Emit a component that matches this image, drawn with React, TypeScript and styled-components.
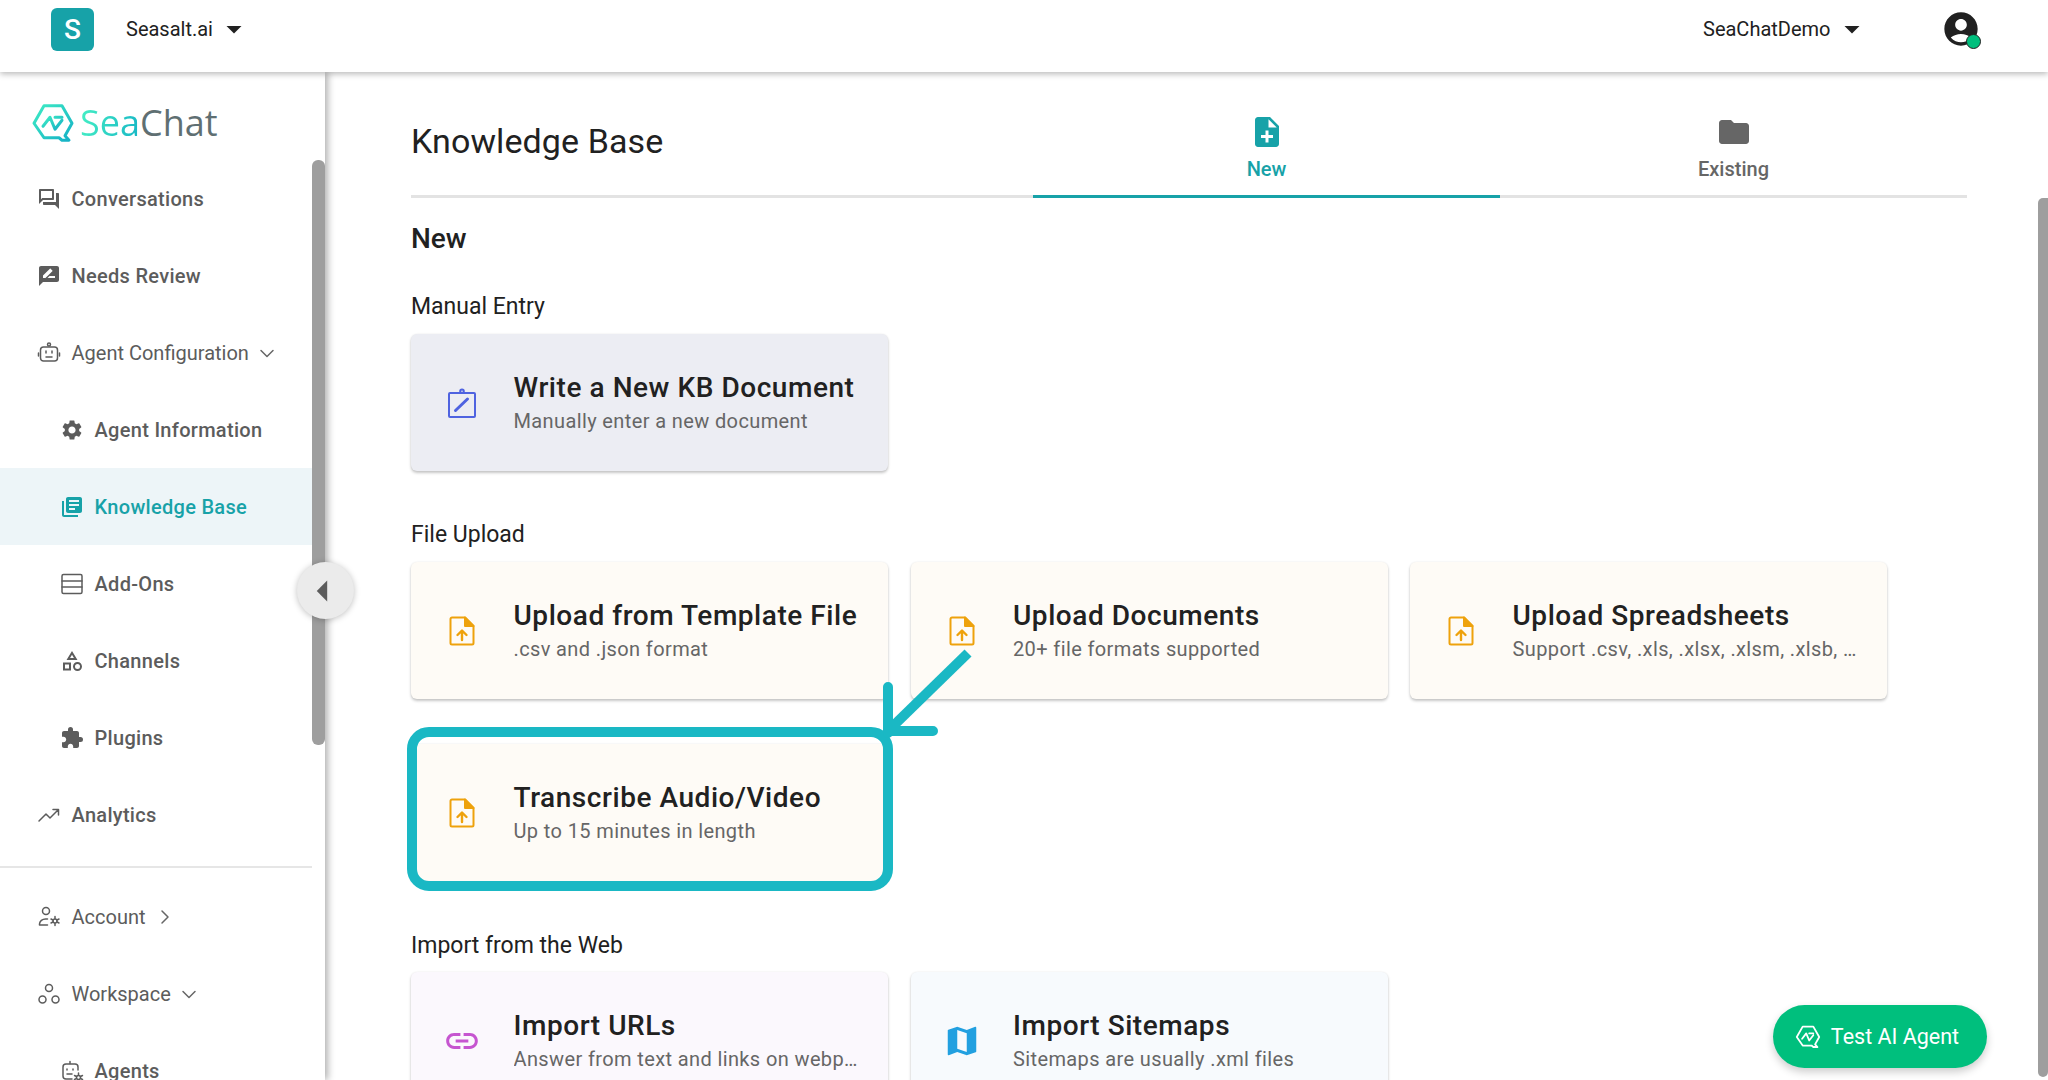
import React from "react";
import styled, { createGlobalStyle } from "styled-components";
import {
  MdArrowDropDown, MdOutlineForum, MdRateReview, MdSettings, MdLibraryBooks, MdExtension,
  MdNoteAdd, MdFolder, MdLink, MdMap,
  MdAccountCircle, MdArrowLeft, MdOutlineCategory,
} from "react-icons/md";

const Global = createGlobalStyle`
  html, body { margin: 0; padding: 0; height: 1080px; overflow: hidden; background: #fff; }
  * { box-sizing: border-box; }
  body { font-family: Roboto, "Liberation Sans", sans-serif; color: #212121; }
`;

const Page = styled.div`
  width: 2048px; height: 1080px; position: relative; overflow: hidden;
  display: flex; flex-direction: column; background: #fff;
`;
const TopBar = styled.header`
  height: 72px; flex: none; display: flex; align-items: center; padding: 0 67px 14px 51px;
  background: #fff; box-shadow: 0 2px 6px rgba(0,0,0,.28); position: relative; z-index: 3;
`;
const Badge = styled.div`
  width: 43px; height: 43px; border-radius: 6px; background: #17a2a8; color: #fff;
  display: flex; align-items: center; justify-content: center; font-size: 28px; font-weight: 500;
`;
const Switcher = styled.div<{ $gap: number }>`
  display: flex; align-items: center; margin-left: ${p => p.$gap}px; font-size: 20px; color: #212121;
  svg { margin-left: 3.5px; }
`;
const Spacer = styled.div`flex: 1;`;
const Avatar = styled.div`
  width: 40px; height: 40px; position: relative; margin-left: 71px;
  color: #212121; display: flex; align-items: center; justify-content: center;
`;
const StatusDot = styled.span`
  position: absolute; right: 0; bottom: 0; width: 15px; height: 15px; border-radius: 50%;
  background: #00bf7d; border: 1.5px solid #212121;
`;
const Body = styled.div`flex: 1; display: flex; min-height: 0; position: relative;`;
const Sidebar = styled.aside`
  width: 325px; flex: none; background: #fff; position: relative; z-index: 2;
  box-shadow: 3px 0 7px rgba(0,0,0,.3); overflow: hidden; padding-right: 13px;
`;
const LogoRow = styled.div`
  height: 88px; display: flex; align-items: center; padding: 14px 0 0 31px;
`;
const Wordmark = styled.div`
  font-family: "Open Sans", sans-serif; font-size: 36px; font-weight: 500; line-height: 1; letter-spacing: 0; margin-left: 5px;
  color: #5f6f72; display: flex;
`;
const WordSea = styled.span`
  background: linear-gradient(100deg, #45f0c4, #17b6c6);
  -webkit-background-clip: text; background-clip: text; color: transparent;
`;
const Row = styled.div<{ $active?: boolean; $indent?: boolean; $thin?: boolean }>`
  height: 77px; display: flex; align-items: center;
  padding-left: ${p => (p.$indent ? 60 : 37)}px;
  background: ${p => (p.$active ? "#edf5f8" : "transparent")};
  color: ${p => (p.$active ? "#17a2a8" : "#5c5c5c")};
  font-size: 20px; font-weight: ${p => (p.$thin ? 400 : 500)}; letter-spacing: ${p => (p.$thin ? 0 : 0.3)}px;
`;
const RowIcon = styled.span`
  width: 24px; height: 24px; margin-right: 10.500px; display: flex; align-items: center; justify-content: center; flex: none;
`;
const Chevron = styled.span<{ $gap: number }>`
  margin-left: ${p => p.$gap}px; display: flex; color: #666;
`;
const Divider = styled.div`height: 2px; background: #e6e6e6; margin: 13px 0 10px;`;
const SideThumb = styled.div`
  position: absolute; left: 312px; top: 88px; width: 13px; height: 585px; background: #9e9e9e; border-radius: 6px;
`;
const Collapse = styled.div`
  position: absolute; left: 297px; top: 490px; width: 57px; height: 57px; border-radius: 50%;
  background: #ebebeb; box-shadow: 0 1px 6px rgba(0,0,0,.25); z-index: 4; padding-right: 5px;
  display: flex; align-items: center; justify-content: center; color: #5c5c5c;
`;
const Main = styled.main`
  flex: 1; min-width: 0; padding: 0 81px 0 86px; overflow: hidden;
`;
const TitleBar = styled.div`
  height: 126px; display: flex; border-bottom: 3px solid #e3e3e3;
`;
const PageTitle = styled.h1`
  margin: 0; width: 622px; flex: none; font-size: 34px; font-weight: 400; color: #212121; padding-top: 49px; line-height: 40px; letter-spacing: .1px;
`;
const Tab = styled.div<{ $active?: boolean }>`
  flex: 1; height: 126px; display: flex; flex-direction: column; align-items: center; padding-top: 42px;
  color: ${p => (p.$active ? "#17a2a8" : "#666")};
  border-bottom: 3px solid ${p => (p.$active ? "#17a2a8" : "transparent")};
  font-size: 20px; font-weight: 500; line-height: 24px;
  svg { margin-bottom: 7px; }
`;
const SectionTitle = styled.h2`
  margin: 25px 0 0; font-size: 28px; font-weight: 500; line-height: 32px; color: #212121;
`;
const GroupLabel = styled.div<{ $top: number; $bottom?: number }>`
  margin-top: ${p => p.$top}px; font-size: 23px; line-height: 28px; color: #212121; margin-bottom: ${p => p.$bottom ?? 13}px;
`;
const CardGrid = styled.div`
  display: grid; grid-template-columns: repeat(3, 477px); gap: 45px 22.5px;
`;
const Card = styled.div<{ $bg: string }>`
  height: 137px; background: ${p => p.$bg}; border-radius: 6px; display: flex; align-items: center;
  padding-left: 32px; box-shadow: 0 2px 3px rgba(0,0,0,.22), 0 0 2px rgba(0,0,0,.08);
`;
const CardIcon = styled.div<{ $color: string }>`
  width: 38px; height: 38px; flex: none; color: ${p => p.$color}; display: flex; align-items: center; justify-content: center;
`;
const CardText = styled.div`
  margin-left: 32.500px; min-width: 0; flex: 1; padding-right: 30px; margin-top: -1px;
`;
const CardTitle = styled.div`
  font-size: 28px; font-weight: 500; line-height: 35px; color: #212121; white-space: nowrap; letter-spacing: .55px;
`;
const CardSub = styled.div`
  font-size: 20px; line-height: 28px; color: #666; white-space: nowrap; overflow: hidden; text-overflow: ellipsis; letter-spacing: .38px; margin-top: 2px;
`;
const Highlight = styled.div`
  position: absolute; left: 407px; top: 727px; width: 486px; height: 164px; border: 10px solid #1ab8c4; border-radius: 22px; z-index: 5;
`;
const ArrowMark = styled.svg`
  position: absolute; left: 870px; top: 640px; width: 110px; height: 110px; z-index: 6;
`;
const MainThumb = styled.div`
  position: absolute; right: 0; top: 126px; width: 10px; height: 879px; background: #9e9e9e; border-radius: 10px 0 10px 10px; z-index: 1;
`;
const TestButton = styled.button`
  position: absolute; left: 1773px; top: 1005px; width: 214px; height: 63px; border: 0; border-radius: 32px; padding: 0 6px 0 0;
  background: #00bf7d; color: #fff; display: flex; align-items: center; justify-content: center; gap: 10px;
  font-family: inherit; font-size: 21.500px; box-shadow: 0 4px 8px rgba(0,0,0,.2); z-index: 6;
`;

const LogoMark = ({ size = 44, stroke = "url(#lg)" }: { size?: number; stroke?: string }) => (
  <svg width={size} height={size * 0.92} viewBox="0 0 44 40" fill="none">
    <defs>
      <linearGradient id="lg" x1="0" y1="0" x2="1" y2="1">
        <stop offset="0" stopColor="#3fecc4" />
        <stop offset="1" stopColor="#14b0c6" />
      </linearGradient>
    </defs>
    <path d="M13 2.500h18L41 20l-7 12.500 4 4.500h-7l-3-2.500H13L3 20z" stroke={stroke} strokeWidth="3" strokeLinejoin="round" />
    <path d="M12 23l7-9 5 12 7-9M24 14h7" stroke={stroke} strokeWidth="3" strokeLinejoin="round" strokeLinecap="round" />
  </svg>
);
const Line = ({ d, size = 24 }: { d: React.ReactNode; size?: number }) => (
  <svg width={size} height={size} viewBox="0 0 24 24" fill="none" stroke="currentColor" strokeWidth="1.5" strokeLinecap="round" strokeLinejoin="round">{d}</svg>
);
const ChevDown = () => <Line d={<path d="M6 9.500l6 6 6-6" />} />;
const ChevRight = () => <Line d={<path d="M9 6l6 6-6 6" />} />;
const RobotIcon = () => <Line d={<>
  <rect x="3.500" y="6" width="17" height="14" rx="3" /><circle cx="12" cy="3.500" r="1.500" /><path d="M9 10v2M15 10v2M9 16h6M1.500 12v3M22.500 12v3" />
</>} />;
const AddOnsIcon = () => <Line d={<>
  <rect x="2" y="2.500" width="20" height="19" rx="1.500" /><path d="M2 9h20M2 15h20" />
</>} />;
const TrendIcon = () => <Line d={<path d="M2 18l7-7 4 4 8-8M16 6.500h5.500V12" />} />;
const AccountIcon = () => <Line d={<>
  <circle cx="9" cy="6" r="3.500" /><path d="M2.500 20h8M2.500 20v-1c0-3 3-5 6-5h2" /><circle cx="18" cy="16" r="2" /><path d="M18 11.500v2M18 18.500v2M14 14l2 1M20 17l2 1M14 18l2-1M20 15l2-1" />
</>} />;
const WorkspaceIcon = () => <Line d={<>
  <circle cx="12" cy="6" r="3.500" /><circle cx="5.500" cy="17.500" r="3.500" /><circle cx="18.500" cy="17.500" r="3.500" />
</>} />;
const AgentsIcon = () => <Line d={<>
  <path d="M12 20H6a3 3 0 0 1-3-3V8a3 3 0 0 1 3-3h9a3 3 0 0 1 3 3v3" /><path d="M7 10v1M13 10v1M7 15h5M10 2.500v2" /><circle cx="18.500" cy="18.500" r="2" /><path d="M18.500 14v2M18.500 21v2M14.500 16.500l2 1M20.500 19.500l2 1M14.500 20.500l2-1M20.500 17.500l2-1" />
</>} />;
const ClipboardIcon = () => (
  <svg width="28" height="30" viewBox="0 0 28 30" fill="none" stroke="currentColor" strokeWidth="2">
    <path d="M2 5h24a1 1 0 0 1 1 1v22a1 1 0 0 1-1 1H2a1 1 0 0 1-1-1V6a1 1 0 0 1 1-1z" />
    <circle cx="14" cy="3.200" r="1.800" />
    <path d="M7.500 22.500L19.500 11" strokeWidth="3" strokeLinecap="round" />
  </svg>
);
const Upload = () => (
  <svg width="26" height="30" viewBox="0 0 26 30" fill="none" stroke="currentColor" strokeWidth="2" strokeLinejoin="round">
    <path d="M16 1.500H3a1.500 1.500 0 0 0-1.500 1.500v24A1.500 1.500 0 0 0 3 28.500h20a1.500 1.500 0 0 0 1.500-1.500V10z" />
    <path d="M16 1.500L24.500 10H16z" fill="currentColor" />
    <path d="M13 24v-9M8.500 19l4.500-4.500 4.500 4.500" strokeWidth="2.400" strokeLinecap="round" />
  </svg>
);

type RowDef = { icon: React.ReactNode; label: string; indent?: boolean; active?: boolean; thin?: boolean; chev?: React.ReactNode; gap?: number };
const topRows: RowDef[] = [
  { icon: <MdOutlineForum size={24} />, label: "Conversations" },
  { icon: <MdRateReview size={24} />, label: "Needs Review" },
  { icon: <RobotIcon />, label: "Agent Configuration", thin: true, chev: <ChevDown />, gap: 6 },
  { icon: <MdSettings size={24} />, label: "Agent Information", indent: true },
  { icon: <MdLibraryBooks size={24} />, label: "Knowledge Base", indent: true, active: true },
  { icon: <AddOnsIcon />, label: "Add-Ons", indent: true },
  { icon: <MdOutlineCategory size={24} />, label: "Channels", indent: true },
  { icon: <MdExtension size={24} />, label: "Plugins", indent: true },
  { icon: <TrendIcon />, label: "Analytics" },
];
const bottomRows: RowDef[] = [
  { icon: <AccountIcon />, label: "Account", thin: true, chev: <ChevRight />, gap: 7 },
  { icon: <WorkspaceIcon />, label: "Workspace", thin: true, chev: <ChevDown />, gap: 6 },
  { icon: <AgentsIcon />, label: "Agents", indent: true },
];
const renderRow = (r: RowDef) => (
  <Row key={r.label} $active={r.active} $indent={r.indent} $thin={r.thin}>
    <RowIcon>{r.icon}</RowIcon>{r.label}
    {r.chev && <Chevron $gap={r.gap ?? 8}>{r.chev}</Chevron>}
  </Row>
);

const amber = "#eea20c";
const cream = "#fefbf6";

type CardDef = { title: string; sub: string; icon: React.ReactNode; color: string; bg: string };
const DocCard = ({ c }: { c: CardDef }) => (
  <Card $bg={c.bg}>
    <CardIcon $color={c.color}>{c.icon}</CardIcon>
    <CardText><CardTitle>{c.title}</CardTitle><CardSub>{c.sub}</CardSub></CardText>
  </Card>
);

const App = () => (
  <Page>
    <Global />
    <TopBar>
      <Badge>S</Badge>
      <Switcher $gap={32}>Seasalt.ai<MdArrowDropDown size={36} /></Switcher>
      <Spacer />
      <Switcher $gap={0}>SeaChatDemo<MdArrowDropDown size={36} /></Switcher>
      <Avatar><MdAccountCircle size={50} /><StatusDot /></Avatar>
    </TopBar>
    <Body>
      <Sidebar>
        <LogoRow>
          <LogoMark />
          <Wordmark><WordSea>Sea</WordSea>Chat</Wordmark>
        </LogoRow>
        {topRows.map(renderRow)}
        <Divider />
        {bottomRows.map(renderRow)}
        <SideThumb />
      </Sidebar>
      <Collapse><MdArrowLeft size={50} /></Collapse>
      <Main>
        <TitleBar>
          <PageTitle>Knowledge Base</PageTitle>
          <Tab $active><MdNoteAdd size={36} />New</Tab>
          <Tab><MdFolder size={36} />Existing</Tab>
        </TitleBar>
        <SectionTitle>New</SectionTitle>
        <GroupLabel $top={38}>Manual Entry</GroupLabel>
        <CardGrid>
          <DocCard c={{ title: "Write a New KB Document", sub: "Manually enter a new document", icon: <ClipboardIcon />, color: "#4f63e0", bg: "#ecedf3" }} />
        </CardGrid>
        <GroupLabel $top={50}>File Upload</GroupLabel>
        <CardGrid>
          <DocCard c={{ title: "Upload from Template File", sub: ".csv and .json format", icon: <Upload />, color: amber, bg: cream }} />
          <DocCard c={{ title: "Upload Documents", sub: "20+ file formats supported", icon: <Upload />, color: amber, bg: cream }} />
          <DocCard c={{ title: "Upload Spreadsheets", sub: "Support .csv, .xls, .xlsx, .xlsm, .xlsb, .odf, .ods", icon: <Upload />, color: amber, bg: cream }} />
          <DocCard c={{ title: "Transcribe Audio/Video", sub: "Up to 15 minutes in length", icon: <Upload />, color: amber, bg: cream }} />
        </CardGrid>
        <GroupLabel $top={51} $bottom={12}>Import from the Web</GroupLabel>
        <CardGrid>
          <DocCard c={{ title: "Import URLs", sub: "Answer from text and links on webpages", icon: <MdLink size={38} />, color: "#c655d0", bg: "#fbf8fd" }} />
          <DocCard c={{ title: "Import Sitemaps", sub: "Sitemaps are usually .xml files", icon: <MdMap size={38} />, color: "#22a0e0", bg: "#f7fafd" }} />
        </CardGrid>
      </Main>
      <MainThumb />
    </Body>
    <Highlight />
    <ArrowMark viewBox="0 0 110 110" fill="none" stroke="#1ab8c4" strokeWidth="10" strokeLinecap="round">
      <path d="M98 13L18 91" strokeLinecap="butt" />
      <path d="M18 47v46M18 91h45" />
    </ArrowMark>
    <TestButton><LogoMark size={26} stroke="#fff" />Test AI Agent</TestButton>
  </Page>
);
export default App;
